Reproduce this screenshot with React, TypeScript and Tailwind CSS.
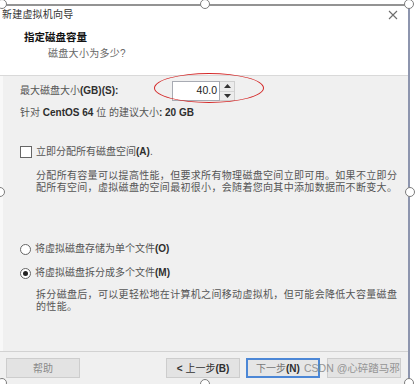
import React from "react";

function Handle({ cls }: { cls: string }) {
  return (
    <div
      className={`absolute w-[10px] h-[10px] rounded-full border-[1.5px] border-[#7d7d7d] bg-white ${cls}`}
    />
  );
}

function L({ children }: { children: React.ReactNode }) {
  return <span className="text-[#2e2e2e] font-semibold">{children}</span>;
}

export default function App() {
  return (
    <div className="relative w-[417px] h-[384px] overflow-hidden bg-white font-['Liberation_Sans','Noto_Sans_CJK_SC',sans-serif] text-[10px] text-[#555]">
      <div className="pt-[4px]">
        <div className="w-[410px] h-[400px] border-t-2 border-t-[#939393] border-r-2 border-r-[#8d95ae] bg-white">
          {/* title bar */}
          <div className="h-[18px] flex items-center justify-between pl-[2px] pr-[10px]">
            <span className="text-[10px] tracking-[0.2px] text-[#333] leading-[18px]">新建虚拟机向导</span>
            <svg width="10" height="10" viewBox="0 0 10 10">
              <path d="M1 1L9 9M9 1L1 9" stroke="#6d6d6d" strokeWidth="1.1" />
            </svg>
          </div>
          {/* header */}
          <div className="h-[52px] bg-white border-b border-[#d9d9d9] pl-[24px] pt-[6px]">
            <div className="leading-[14px] text-[10.5px] font-bold text-[#111]">指定磁盘容量</div>
            <div className="mt-[3px] pl-[24px] leading-[14px] text-[10px] tracking-[0.3px] text-[#666]">磁盘大小为多少?</div>
          </div>
          {/* body */}
          <div className="h-[275px] bg-[#f0f0f0] border-l-[3px] border-l-[#f8f8f8] pl-[17px] pt-[5px]">
            <div className="h-[20px] flex items-center">
              <div className="w-[152px] leading-[14px]">
                最大磁盘大小<L>(GB)(S):</L>
              </div>
              <div className="w-[48px] h-[20px] border border-[#a8abb3] bg-white flex items-center justify-end pr-[2px] text-[10.5px] text-[#222]">
                40.0
              </div>
              <div className="w-[15px] h-[20px] flex flex-col border border-l-0 border-[#cfcfcf] bg-[#ececec]">
                <div className="flex-1 flex items-center justify-center border-b border-[#d5d5d5]">
                  <svg width="7" height="4" viewBox="0 0 7 4"><path d="M0 4L3.5 0L7 4Z" fill="#333" /></svg>
                </div>
                <div className="flex-1 flex items-center justify-center">
                  <svg width="7" height="4" viewBox="0 0 7 4"><path d="M0 0L3.5 4L7 0Z" fill="#333" /></svg>
                </div>
              </div>
            </div>
            <div className="mt-[5px] leading-[14px]">
              针对 <L>CentOS 64</L> 位 的建议大小<L>: 20 GB</L>
            </div>
            <div className="mt-[25px] h-[14px] flex items-center">
              <div className="w-[12px] h-[12px] border border-[#666] bg-white" />
              <span className="ml-[4px] leading-[14px]">
                立即分配所有磁盘空间<L>(A)</L>.
              </span>
            </div>
            <div className="mt-[11px] pl-[16px] leading-[12px] text-[10px] tracking-[0.32px] whitespace-nowrap">
              分配所有容量可以提高性能，但要求所有物理磁盘空间立即可用。如果不立即分
              <br />
              配所有空间，虚拟磁盘的空间最初很小，会随着您向其中添加数据而不断变大。
            </div>
            <div className="mt-[48px] h-[14px] flex items-center">
              <div className="w-[11px] h-[11px] rounded-full border border-[#666] bg-white" />
              <span className="ml-[4px] leading-[14px]">
                将虚拟磁盘存储为单个文件<L>(O)</L>
              </span>
            </div>
            <div className="mt-[10px] h-[14px] flex items-center">
              <div className="w-[11px] h-[11px] rounded-full border border-[#666] bg-white flex items-center justify-center">
                <div className="w-[5px] h-[5px] rounded-full bg-[#222]" />
              </div>
              <span className="ml-[4px] leading-[14px]">
                将虚拟磁盘拆分成多个文件<L>(M)</L>
              </span>
            </div>
            <div className="mt-[9px] pl-[16px] leading-[12px] text-[10px] tracking-[0.32px] whitespace-nowrap">
              拆分磁盘后，可以更轻松地在计算机之间移动虚拟机，但可能会降低大容量磁盘
              <br />
              的性能。
            </div>
          </div>
          {/* footer */}
          <div className="border-t border-[#d2d2d2] bg-[#f0f0f0] pt-[6px] h-[50px] flex items-start pl-[6px]">
            <div className="w-[74px] h-[20px] bg-[#e3e3e3] border border-[#cdcdcd] flex items-center justify-center text-[#8a8a8a]">
              帮助
            </div>
            <div className="ml-[86px] w-[74px] h-[20px] bg-[#e3e3e3] border border-[#cdcdcd] flex items-center justify-center text-[#333]">
              <span className="font-semibold mr-[3px]">&lt;</span>上一步<L>(B)</L>
            </div>
            <div className="ml-[6px] w-[74px] h-[20px] bg-[#e6e6e6] border-2 border-[#4c87d6] flex items-center justify-start pl-[8px] text-[#777]">
              下一步<L>(N)</L>
            </div>
            <div className="ml-[7px] w-[74px] h-[20px] bg-[#e3e3e3] border border-[#cdcdcd]" />
          </div>
        </div>
      </div>

      {/* watermark */}
      <div className="absolute left-[304px] top-[361px] text-[10.5px] leading-[14px] text-[#8c8c8c] opacity-90 whitespace-nowrap">
        CSDN @心碎踏马邪
      </div>

      {/* red annotation ellipse */}
      <div className="absolute left-[154px] top-[73px] w-[110px] h-[30px] rounded-[50%] border-[1.5px] border-[#d42828]" />

      {/* selection handles */}
      <Handle cls="left-[-3px] top-[-1px]" />
      <Handle cls="left-[200px] top-[-1px]" />
      <Handle cls="left-[404px] top-[-1px]" />
      <Handle cls="left-[-5px] top-[187px]" />
      <Handle cls="left-[405px] top-[187px]" />
      <Handle cls="left-[-3px] top-[378px]" />
      <Handle cls="left-[200px] top-[379px]" />
      <Handle cls="left-[404px] top-[378px]" />
    </div>
  );
}
